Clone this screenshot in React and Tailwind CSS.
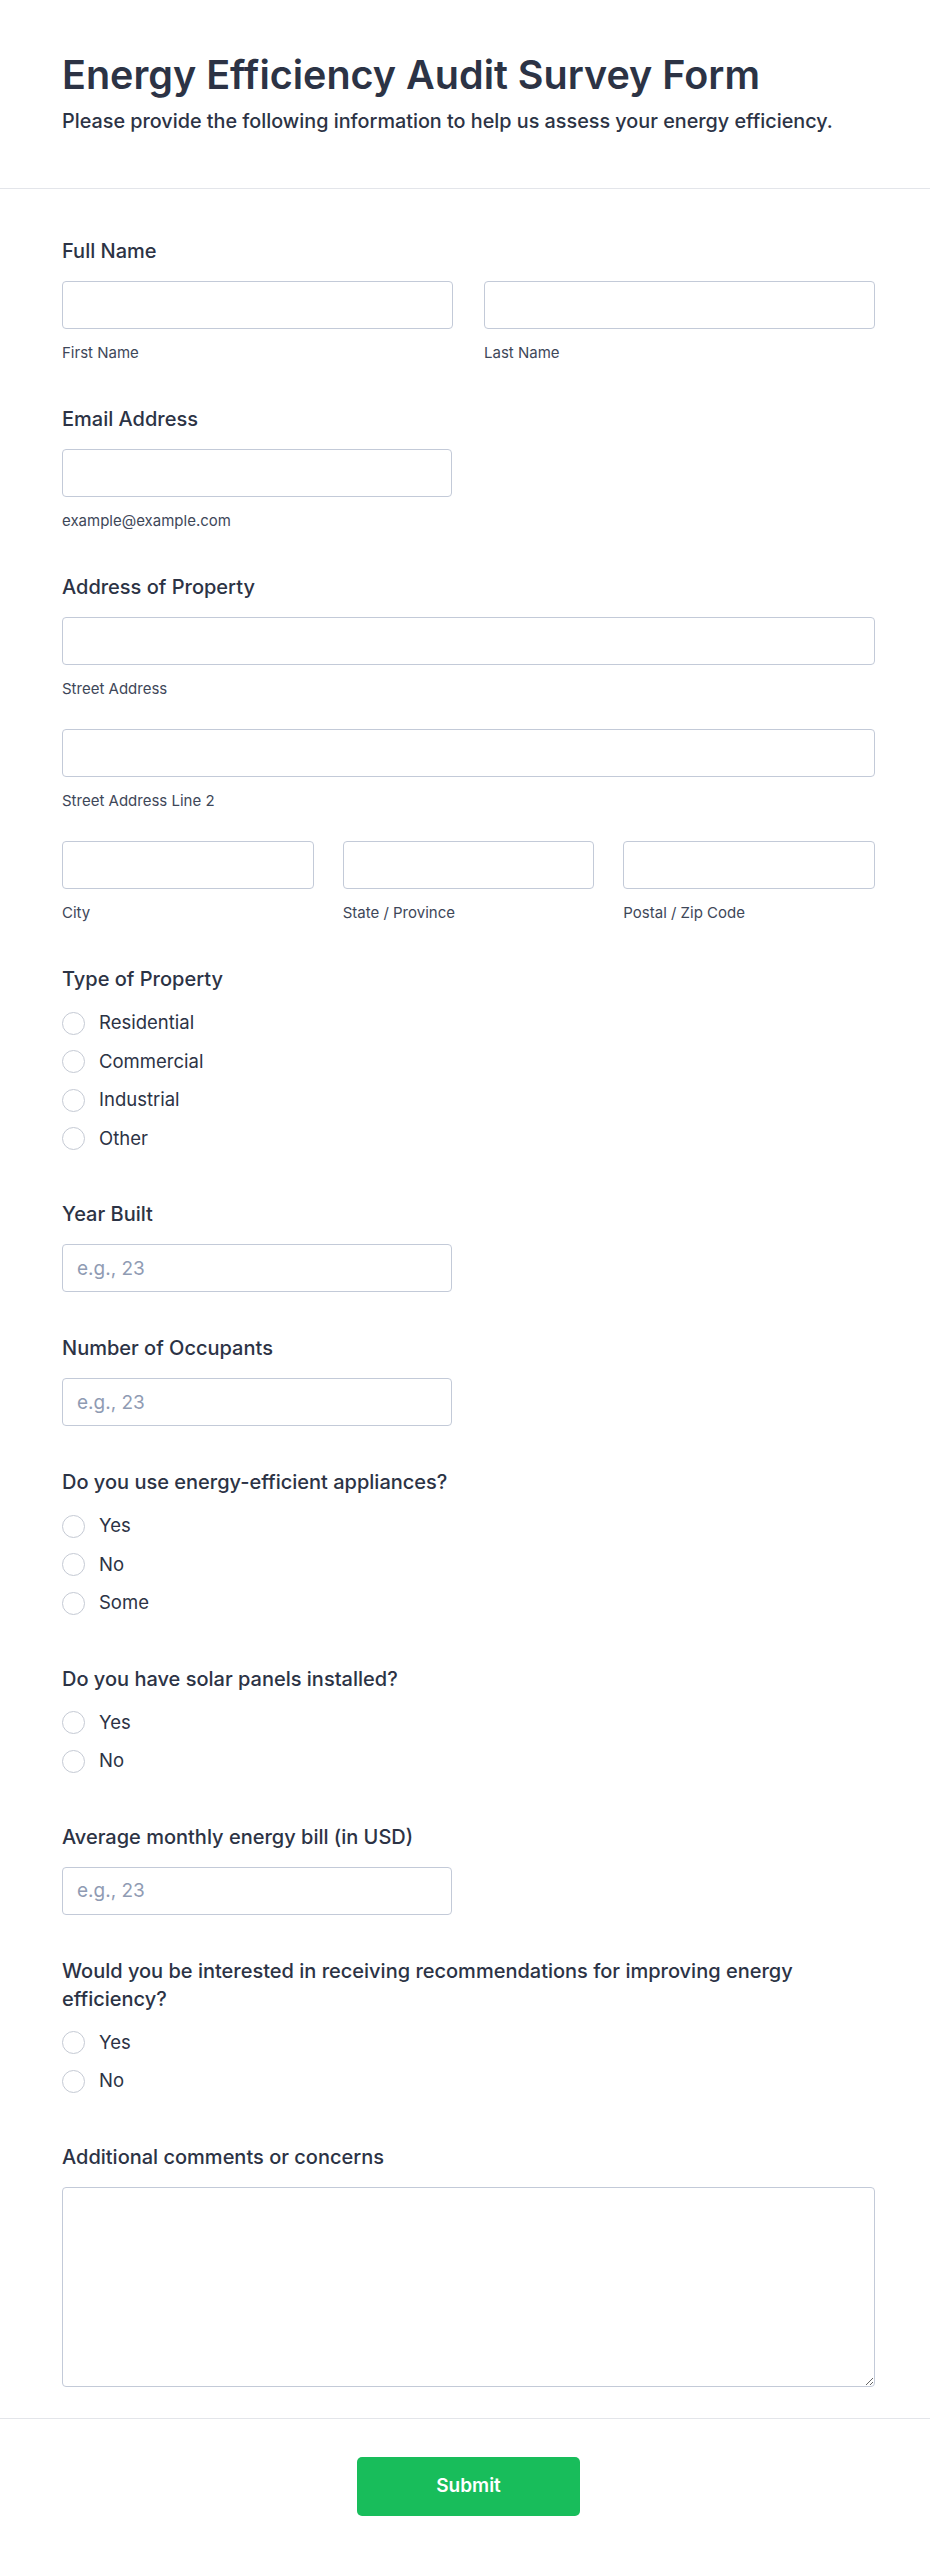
import React from 'react'

const label = 'block text-[20px] leading-7 font-medium text-[#2c3345]'
const sub = 'mt-[14px] block text-[15px] leading-5 text-[#3e4759]'
const box = 'block h-12 w-full rounded-[4px] border border-[#c3cad8] bg-white px-[14px] text-[19px] text-[#2c3345] outline-none placeholder:text-[#8f9bb3]'

function Field({ title, children }) {
  return (
    <div>
      <label className={`${label} mb-4`}>{title}</label>
      {children}
    </div>
  )
}

function Text({ hint, className = '', placeholder }) {
  return (
    <div className={className}>
      <input type="text" className={box} placeholder={placeholder} />
      {hint && <span className={sub}>{hint}</span>}
    </div>
  )
}

function Radios({ title, options }) {
  return (
    <div>
      <div className={`${label} mb-[11px]`}>{title}</div>
      {options.map(o => (
        <div key={o} className="flex h-[38.5px] items-center gap-[14px]">
          <span className="h-[23px] w-[23px] shrink-0 rounded-full border-[1.5px] border-[#c5cad4] bg-white" />
          <span className="text-[18.5px] text-[#2c3345]">{o}</span>
        </div>
      ))}
    </div>
  )
}

export default function App() {
  return (
    <div className="min-h-[2563px] bg-white font-[Inter,sans-serif] text-[#2c3345]">
      <header className="border-b border-[#e3e5ea] pt-[51px] pb-[53px] pl-[62px] pr-[55px]">
        <h1 className="text-[39.5px] leading-[48px] font-semibold text-[#2c3345]">
          Energy Efficiency Audit Survey Form
        </h1>
        <p className="mt-[8px] text-[19.8px] leading-7 font-medium text-[#2c3345]">
          Please provide the following information to help us assess your energy efficiency.
        </p>
      </header>

      <form className="flex flex-col gap-[42px] pt-[48px] pb-[31px] pl-[62px] pr-[55px]">
        <Field title="Full Name">
          <div className="grid grid-cols-2 gap-x-[31px]">
            <Text hint="First Name" />
            <Text hint="Last Name" />
          </div>
        </Field>

        <Field title="Email Address">
          <Text hint="example@example.com" className="w-[390px]" />
        </Field>

        <Field title="Address of Property">
          <div className="flex flex-col gap-[30px]">
            <Text hint="Street Address" />
            <Text hint="Street Address Line 2" />
            <div className="grid grid-cols-3 gap-x-[29px]">
              <Text hint="City" />
              <Text hint="State / Province" />
              <Text hint="Postal / Zip Code" />
            </div>
          </div>
        </Field>

        <Radios title="Type of Property" options={['Residential', 'Commercial', 'Industrial', 'Other']} />

        <Field title="Year Built">
          <Text placeholder="e.g., 23" className="w-[390px]" />
        </Field>

        <Field title="Number of Occupants">
          <Text placeholder="e.g., 23" className="w-[390px]" />
        </Field>

        <Radios title="Do you use energy-efficient appliances?" options={['Yes', 'No', 'Some']} />

        <Radios title="Do you have solar panels installed?" options={['Yes', 'No']} />

        <Field title="Average monthly energy bill (in USD)">
          <Text placeholder="e.g., 23" className="w-[390px]" />
        </Field>

        <Radios
          title="Would you be interested in receiving recommendations for improving energy efficiency?"
          options={['Yes', 'No']}
        />

        <Field title="Additional comments or concerns">
          <textarea className="block h-[200px] w-full rounded-[4px] border border-[#c3cad8] bg-white px-[14px] py-3 text-[19px] outline-none" />
        </Field>
      </form>

      <div className="flex justify-center border-t border-[#e3e5ea] pt-[38px] pb-[50px] pl-[62px] pr-[55px]">
        <button type="button" className="h-[59px] w-[223px] rounded-[5px] bg-[#18bd5b] text-[19px] font-semibold text-white">
          Submit
        </button>
      </div>
    </div>
  )
}
